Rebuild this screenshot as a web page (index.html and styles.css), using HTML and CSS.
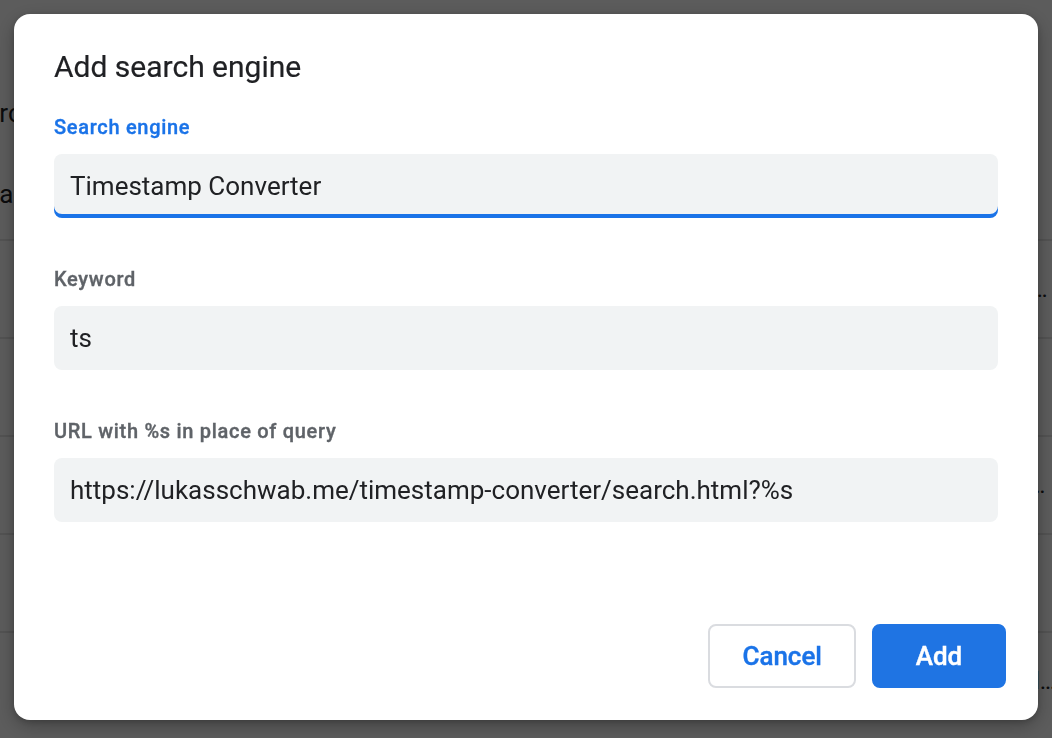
FILE: index.html
```html
<!DOCTYPE html>
<html lang="en">
<head>
<meta charset="utf-8">
<title>Add search engine</title>
<link rel="stylesheet" href="styles.css">
</head>
<body>
  <div class="page">
    <div class="page-head">
      <div class="head-title">Search engines</div>
      <div class="head-sub">Search engine</div>
    </div>
    <ul class="engine-list">
      <li class="engine-row"><span class="engine-name">Google</span><span class="engine-url">{google:baseURL}search?q=%s&amp;{google:RLZ}{google:originalQueryForSuggestion}</span></li>
      <li class="engine-row"><span class="engine-name">Bing</span><span class="engine-url">www.bing.com/search?q=%s</span></li>
      <li class="engine-row"><span class="engine-name">Yahoo!</span><span class="engine-url">https://search.yahoo.com/search?ei=UTF-8&amp;fr=crmas&amp;p=%s&amp;url</span></li>
      <li class="engine-row"><span class="engine-name">DuckDuckGo</span><span class="engine-url">https://duckduckgo.com/?q=%s&amp;t=chrome-extension-search</span></li>
      <li class="engine-row"><span class="engine-name">Ecosia</span><span class="engine-url">https://www.ecosia.org/search?q=%s&amp;addon=chrome-settings</span></li>
    </ul>
  </div>

  <div class="overlay">
    <div class="dialog" role="dialog" aria-labelledby="dlg-title">
      <h2 class="dialog-title" id="dlg-title">Add search engine</h2>
      <div class="dialog-body">
        <div class="field">
          <label class="field-label field-label--focused" for="f-name">Search engine</label>
          <input class="field-input field-input--focused" id="f-name" type="text" value="Timestamp Converter">
        </div>
        <div class="field">
          <label class="field-label" for="f-key">Keyword</label>
          <input class="field-input" id="f-key" type="text" value="ts">
        </div>
        <div class="field">
          <label class="field-label" for="f-url">URL with %s in place of query</label>
          <input class="field-input" id="f-url" type="text" value="https://lukasschwab.me/timestamp-converter/search.html?%s">
        </div>
      </div>
      <div class="dialog-buttons">
        <button class="btn btn--cancel" type="button">Cancel</button>
        <button class="btn btn--action" type="button">Add</button>
      </div>
    </div>
  </div>
</body>
</html>
```

FILE: styles.css
```css
* {
  box-sizing: border-box;
}

html,
body {
  margin: 0;
  height: 100%;
  overflow: hidden;
}

body {
  font-family: Roboto, "Liberation Sans", Arial, sans-serif;
  background: #ffffff;
  color: #202124;
}

/* ---------- underlying settings page ---------- */
.page {
  width: calc(100% + 4px);
  padding-top: 98px;
}

.page-head {
  display: flex;
  flex-direction: column;
}

.head-title {
  font-size: 26px;
  line-height: 30px;
  margin-left: -44px;
  white-space: nowrap;
}

.head-sub {
  font-size: 26px;
  line-height: 30px;
  margin-top: 51px;
  margin-left: -30px;
  white-space: nowrap;
}

.engine-list {
  list-style: none;
  margin: 30px 0 0;
  padding: 0;
}

.engine-row {
  display: flex;
  align-items: center;
  height: 98px;
  border-top: 2px solid #e4e4e4;
  font-size: 24px;
  line-height: 30px;
}

.engine-name {
  width: 600px;
  flex: none;
  padding-left: 40px;
  white-space: nowrap;
}

.engine-url {
  flex: 1;
  min-width: 0;
  overflow: hidden;
  white-space: nowrap;
  text-overflow: ellipsis;
}

/* ---------- modal ---------- */
.overlay {
  position: fixed;
  inset: 0;
  background: rgba(0, 0, 0, 0.64);
  display: flex;
  justify-content: center;
  align-items: flex-start;
  padding-top: 14px;
}

.dialog {
  width: 1024px;
  height: 706px;
  background: #ffffff;
  border-radius: 16px;
  box-shadow: 0 6px 20px rgba(0, 0, 0, 0.28), 0 2px 6px rgba(0, 0, 0, 0.18);
  display: flex;
  flex-direction: column;
  padding-top: 35px;
}

.dialog-title {
  margin: 0;
  padding: 0 40px;
  font-size: 30px;
  line-height: 36px;
  font-weight: 400;
  color: #202124;
  -webkit-text-stroke: 0.2px #202124;
}

.dialog-body {
  margin-top: 30px;
  padding: 0 40px;
  display: flex;
  flex-direction: column;
  gap: 49px;
}

.field {
  display: flex;
  flex-direction: column;
  gap: 15px;
}

.field-label {
  font-size: 20px;
  line-height: 24px;
  font-weight: 500;
  letter-spacing: 0.7px;
  color: #5f6368;
  -webkit-text-stroke: 0.35px #5f6368;
}

.field-label--focused {
  color: #1a73e8;
  -webkit-text-stroke: 0.35px #1a73e8;
}

.field-input {
  appearance: none;
  -webkit-appearance: none;
  display: block;
  width: 100%;
  height: 64px;
  margin: 0;
  border: none;
  outline: none;
  border-radius: 8px;
  background: #f1f3f4;
  padding: 0 16px;
  font-family: Roboto, "Liberation Sans", Arial, sans-serif;
  font-size: 26px;
  color: #202124;
}

.field-input--focused {
  box-shadow: inset 0 -4px 0 #1a73e8;
}

.dialog-buttons {
  margin-top: auto;
  display: flex;
  justify-content: flex-end;
  gap: 16px;
  padding: 0 32px 32px;
}

.btn {
  height: 64px;
  min-width: 134px;
  padding: 0 32px;
  border-radius: 8px;
  font-family: Roboto, "Liberation Sans", Arial, sans-serif;
  font-size: 26px;
  font-weight: 500;
  cursor: pointer;
}

.btn--cancel {
  background: #ffffff;
  border: 2px solid #dadce0;
  color: #1a73e8;
  -webkit-text-stroke: 0.4px #1a73e8;
}

.btn--action {
  background: #1f74e3;
  border: 2px solid #1f74e3;
  color: #ffffff;
  -webkit-text-stroke: 0.4px #ffffff;
}
```
